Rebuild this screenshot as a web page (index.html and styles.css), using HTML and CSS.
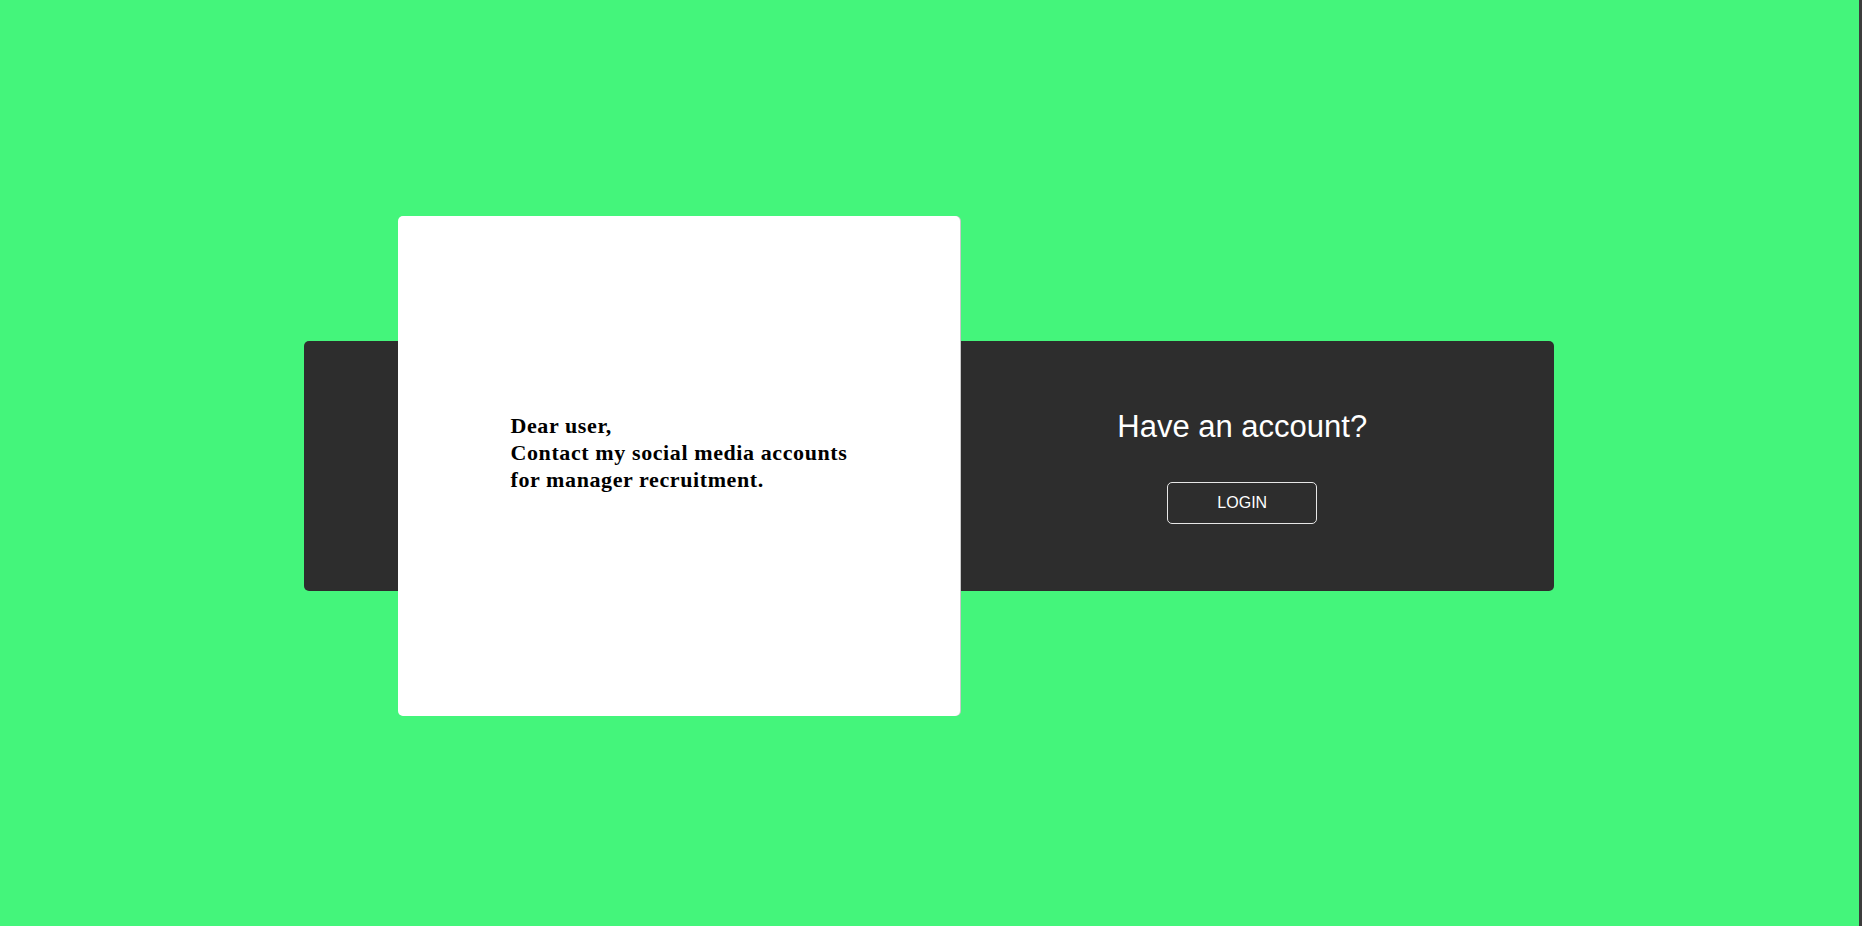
FILE: index.html
```html
<!DOCTYPE html>
<html lang="en">
<head>
<meta charset="utf-8">
<title>Have an account?</title>
<link rel="stylesheet" href="styles.css">
</head>
<body>
<main class="stage">
  <section class="panel">
    <div class="half half-left"></div>
    <div class="half half-right">
      <h2 class="prompt">Have an account?</h2>
      <button class="login-btn" type="button">LOGIN</button>
    </div>
    <div class="card">
      <p class="message">Dear user,<br>Contact my social media accounts<br>for manager recruitment.</p>
    </div>
  </section>
</main>
</body>
</html>
```

FILE: styles.css
```css
html, body {
  margin: 0;
  padding: 0;
}

body {
  background: #44f57b;
  height: 926px;
  overflow: hidden;
  border-right: 3px solid #3c3c3c;
  box-sizing: border-box;
}

.stage {
  height: 926px;
  display: flex;
  align-items: center;
  justify-content: flex-start;
  padding-top: 6px;
  padding-left: 304px;
  box-sizing: border-box;
}

.panel {
  position: relative;
  width: 1250px;
  height: 250px;
  background: #2d2d2d;
  border-radius: 5px;
  display: flex;
}

.half {
  flex: 1 1 0;
  display: flex;
  flex-direction: column;
  align-items: center;
  justify-content: center;
}

.half-right {
  padding-left: 3px;
}

.prompt {
  margin: 0 0 37px;
  font-family: "Liberation Sans", Arial, sans-serif;
  font-weight: normal;
  font-size: 31px;
  color: #ffffff;
  line-height: 36px;
}

.login-btn {
  box-sizing: border-box;
  width: 150px;
  height: 42px;
  background: transparent;
  border: 1px solid #e6e6e6;
  border-radius: 5px;
  color: #ffffff;
  font-family: "Liberation Sans", Arial, sans-serif;
  font-size: 16px;
  padding: 0;
}

.card {
  position: absolute;
  left: 94px;
  top: -125px;
  width: 562px;
  height: 500px;
  background: #ffffff;
  border-radius: 5px;
  box-shadow: 1px 0 0 #c8c8c8;
  display: flex;
  justify-content: center;
  align-items: flex-start;
  padding-top: 196px;
  box-sizing: border-box;
}

.message {
  margin: 0;
  font-family: "Liberation Serif", "Times New Roman", serif;
  font-weight: bold;
  font-size: 22px;
  line-height: 27px;
  letter-spacing: 0.6px;
  color: #000000;
}
```
